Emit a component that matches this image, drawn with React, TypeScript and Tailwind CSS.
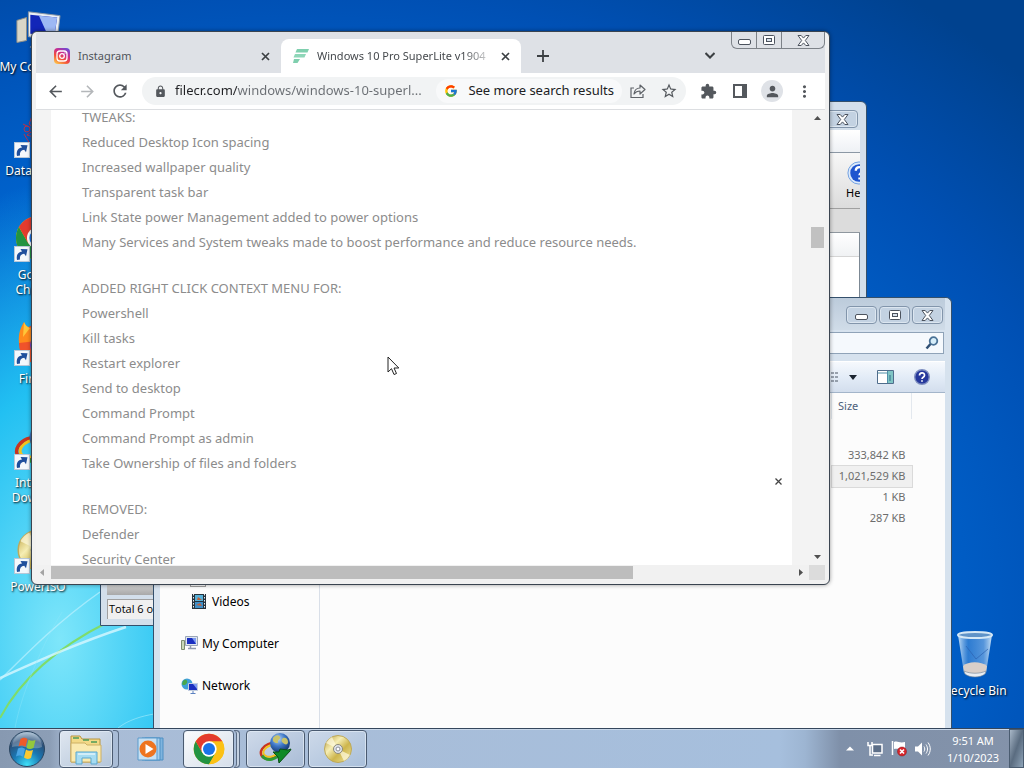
import React from "react";
import {
  MdArrowBack,
  MdArrowForward,
  MdExtension,
  MdLock,
  MdMoreVert,
  MdPerson,
  MdRefresh,
  MdStarBorder,
} from "react-icons/md";
import { FcGoogle } from "react-icons/fc";

/* ---------- Shared glyphs ---------- */

const MinGlyph = () => (
  <svg width="13" height="6" viewBox="0 0 13 6" aria-hidden="true">
    <rect x="0.5" y="0.5" width="12" height="5" rx="1.5" fill="#fff" stroke="#4c535e" />
  </svg>
);

const MaxGlyph = () => (
  <svg width="12" height="10" viewBox="0 0 12 10" aria-hidden="true">
    <rect x="0.5" y="0.5" width="11" height="9" rx="1" fill="#fff" stroke="#4c535e" />
    <rect x="3.5" y="3.5" width="5" height="3" fill="#d9e2ec" stroke="#4c535e" />
  </svg>
);

const CloseGlyph = () => (
  <svg width="13" height="11" viewBox="0 0 13 11" aria-hidden="true">
    <path
      d="M1 .5h3.2l2.3 2.6L8.800.5H12L8.300 5.500 12 10.500H8.800L6.500 7.900 4.200 10.500H1l3.700-5z"
      fill="#fff"
      stroke="#4c535e"
    />
  </svg>
);

const ShortcutArrow = () => (
  <svg width="16" height="16" viewBox="0 0 16 16" className="absolute bottom-0 left-0" aria-hidden="true">
    <rect x="0.5" y="0.5" width="15" height="15" fill="#f4f8fc" stroke="#b8c8d8" />
    <path d="M3 14C2 9 4 6 8 5.500L6.500 3l7 .3-1.500 7-1.800-2.600C7 8 5.500 10 6 13.500z" fill="#1f4f9c" />
  </svg>
);

const ChromeLogo = ({ size }: { size: number }) => (
  <svg width={size} height={size} viewBox="0 0 48 48" aria-hidden="true">
    <circle cx="24" cy="24" r="23" fill="#fbc116" />
    <path d="M4.100 12.500A23 23 0 0 0 24 47L34 29.700 24 24 14 29.700z" fill="#229342" />
    <path d="M43.900 12.500A23 23 0 0 1 24 47L34 29.700 32 16z" fill="#fbc116" />
    <path d="M4.100 12.500A23 23 0 0 1 43.900 12.500H24L14 29.700z" fill="#e33b2e" />
    <circle cx="24" cy="24" r="11.500" fill="#fff" />
    <circle cx="24" cy="24" r="9" fill="#1a73e8" />
  </svg>
);

const IdmLogo = ({ size }: { size: number }) => (
  <svg width={size} height={size} viewBox="0 0 34 34" aria-hidden="true">
    <defs>
      <radialGradient id="idmGlobe" cx="0.4" cy="0.3" r="0.7">
        <stop offset="0" stopColor="#bcd8f4" />
        <stop offset="0.5" stopColor="#3f78c8" />
        <stop offset="1" stopColor="#14366e" />
      </radialGradient>
    </defs>
    <g fill="none" transform="rotate(-22 12 19)">
      <ellipse cx="12" cy="19" rx="10.500" ry="7.500" stroke="#c8341f" strokeWidth="2.500" />
      <ellipse cx="12.500" cy="19" rx="8.500" ry="5.500" stroke="#f2c21c" strokeWidth="2" />
      <path d="M2 20C4 28 14 29 21 24" stroke="#2f9a35" strokeWidth="3" />
    </g>
    <circle cx="21" cy="11" r="10" fill="url(#idmGlobe)" />
    <path d="M14 6c3-4 6-3 7-1s-3 3-2 5-4 1-5-1zM24 6c3-1 5 1 5 4s-3 3-5 1-2-3 0-5z" fill="#c9c36a" />
    <path d="M14 20l6 0 1-3 8 1 3-1-1 2-11 12 -1-6z" fill="#0f8a26" stroke="#0a4f15" />
  </svg>
);

const DiscLogo = ({ size }: { size: number }) => (
  <svg width={size} height={size} viewBox="0 0 30 30" aria-hidden="true">
    <defs>
      <linearGradient id="disc" x1="0" y1="0" x2="1" y2="1">
        <stop offset="0" stopColor="#b79a36" />
        <stop offset="0.35" stopColor="#f6eeb4" />
        <stop offset="0.6" stopColor="#cdb54c" />
        <stop offset="1" stopColor="#f3e9a2" />
      </linearGradient>
    </defs>
    <circle cx="15" cy="15" r="13.500" fill="url(#disc)" stroke="#bda95a" />
    <path d="M15 15 3 9a13 13 0 0 1 6-6zM15 15l12 6a13 13 0 0 1-6 6z" fill="#fffbe0" opacity="0.700" />
    <circle cx="15" cy="15" r="4.500" fill="#dfe3ea" stroke="#8c8a78" />
    <circle cx="15" cy="15" r="2" fill="#fff" stroke="#8c9098" />
  </svg>
);

const ComputerIcon = ({ size }: { size: number }) => (
  <svg width={size} height={size} viewBox="0 0 48 48" aria-hidden="true">
    <path d="M2 14l10-3v24L2 37z" fill="#d9d6c8" stroke="#8f8f88" />
    <path d="M14 5l33 4-3 26-30-4z" fill="#e9eef4" stroke="#8b96a5" />
    <path d="M16 8l28 3-3 20-25-3z" fill="#1226b8" />
    <path d="M25 9l19 2-3 19-7-1z" fill="#9db8f4" />
    <path d="M20 37h20l4 5H16z" fill="#cdd4dd" stroke="#8b96a5" />
  </svg>
);

/* ---------- Desktop ---------- */

const Wallpaper = () => (
  <svg
    className="absolute bottom-0 left-0"
    width="200"
    height="160"
    viewBox="0 568 200 160"
    fill="none"
    aria-hidden="true"
  >
    <path d="M0 718C18 684 52 650 108 622" stroke="#7fdc6a" strokeWidth="2" />
    <path d="M0 678C40 660 80 642 126 627" stroke="#d8f8ff" strokeWidth="2.500" opacity="0.800" />
    <path d="M0 680C30 650 60 620 100 592" stroke="#c8f4ff" strokeWidth="1.500" opacity="0.600" />
    <path d="M118 728C128 720 142 716 154 714" stroke="#a8ecfc" opacity="0.600" />
    <path d="M15 728C22 690 45 640 62 612" stroke="#8fe6fb" opacity="0.400" />
  </svg>
);

interface DesktopIconProps {
  label: string;
  shortcut?: boolean;
  children: React.ReactNode;
}

const DesktopIcon: React.FC<DesktopIconProps> = ({ label, shortcut, children }) => {
  return (
    <button className="flex h-26 w-19 flex-col items-center gap-[5px]">
      <span className="relative flex h-12 w-12 items-center justify-center">
        {children}
        {shortcut && <ShortcutArrow />}
      </span>
      <span className="text-center text-xs leading-[15px] whitespace-pre text-white [text-shadow:1px_1px_2px_#000]">
        {label}
      </span>
    </button>
  );
};

const captionButton =
  "flex h-[18px] items-center justify-center rounded-sm border border-[#8295ab] bg-[#c3d2e2] shadow-[inset_0_0_0_1px_#dce6f0]";

/* ---------- Archive manager, at the back ---------- */

const ArchiveWindow = () => {
  return (
    <section
      aria-label="Archive manager"
      className="absolute top-[101px] left-[100px] flex h-[525px] w-[767px] flex-col rounded-t-md border border-[#34506c] bg-[#d3dfeb] px-1.5 pb-1.5"
    >
      <header className="flex h-7 shrink-0 items-end justify-end pr-0.5 pb-0.5">
        <button aria-label="Close" className={`${captionButton} w-8`}>
          <CloseGlyph />
        </button>
      </header>
      <div className="h-[23px] shrink-0 border-b border-[#8c98a5] bg-gradient-to-b from-white to-[#eef1f5]" />
      <div className="flex h-14 shrink-0 items-center justify-end border-b border-[#a0a0a0] bg-gradient-to-b from-[#f7f7f7] to-[#dcdcdc]">
        <button aria-label="Help" className="flex w-3.5 flex-col items-start overflow-hidden text-[11px] leading-4 text-black">
          <svg width="26" height="24" viewBox="0 0 26 26" className="shrink-0" aria-hidden="true">
            <circle cx="13" cy="13" r="12" fill="#dceafb" stroke="#6a9be0" />
            <circle cx="13" cy="13" r="9.500" fill="#1f55cf" />
            <path d="M9.500 10.500c0-5 7.500-5 7.500-.5 0 3-3.500 3-3.500 5.500M13.500 18v2" fill="none" stroke="#fff" strokeWidth="2.500" />
          </svg>
          He
        </button>
      </div>
      <div className="h-6 shrink-0 border-b border-[#8f979f] bg-[#dcdcdc]" />
      <div className="flex grow flex-col border-r border-[#7c8894] bg-white">
        <div className="h-6 border-b border-[#d5d5d5] bg-gradient-to-b from-white to-[#f0f2f4]" />
      </div>
      <div className="h-3 shrink-0 bg-gradient-to-b from-[#d4d4d4] to-[#a9a9a9]" />
      <div className="mt-1 flex h-5 shrink-0 items-center border-t border-l border-[#a0a0a0] bg-[#f0f0f0] pl-px font-['Open_Sans',sans-serif] text-[11px] text-black">
        Total 6 obj
      </div>
    </section>
  );
};

/* ---------- Explorer window ---------- */

const files = [
  { size: "333,842 KB", selected: false },
  { size: "1,021,529 KB", selected: true },
  { size: "1 KB", selected: false },
  { size: "287 KB", selected: false },
];

const ExplorerWindow = () => {
  return (
    <section
      aria-label="Explorer"
      className="absolute top-[297px] bottom-0 left-[153px] flex w-[799px] flex-col rounded-t-md border border-b-0 border-[#34506c] bg-[#d6e2ee] px-1.5"
    >
      <header className="flex h-8 shrink-0 items-start justify-end gap-0.5 bg-gradient-to-b from-[#bccbdb] to-[#d0dce8] pt-2 pr-0.5">
        <button aria-label="Minimize" className={`${captionButton} w-[31px] pt-1`}>
          <MinGlyph />
        </button>
        <button aria-label="Maximize" className={`${captionButton} w-[31px]`}>
          <MaxGlyph />
        </button>
        <button aria-label="Close" className={`${captionButton} w-[31px]`}>
          <CloseGlyph />
        </button>
      </header>
      <div className="flex h-[31px] shrink-0 justify-end pt-0.5 pr-px">
        <label className="relative flex h-[22px] w-50 items-center border border-[#8fa3b8] bg-[#f5f9fd]">
          <input type="search" aria-label="Search folder" className="w-full bg-transparent px-1 text-xs outline-none" />
          <svg width="14" height="14" viewBox="0 0 14 14" className="mr-1 shrink-0" aria-hidden="true">
            <circle cx="8.500" cy="5" r="3.800" fill="#d6eefa" stroke="#4a7296" strokeWidth="1.800" />
            <path d="M5.500 8 1.500 12.500" stroke="#2f4f74" strokeWidth="2.500" />
          </svg>
        </label>
      </div>
      <div className="flex h-8 shrink-0 items-center justify-end border-t border-b border-t-white border-b-[#a3b5ca] bg-gradient-to-b from-[#f6f9fd] via-[#e3ecf7] to-[#d3deed] pr-[15px]">
        <button aria-label="Change view" className="flex items-center gap-2.5">
          <svg width="14" height="10" viewBox="0 0 14 10" aria-hidden="true">
            <path d="M0 1h5M6 1h3M10 1h3M0 5h5M6 5h3M10 5h3M0 9h5M6 9h3M10 9h3" stroke="#4b5563" />
          </svg>
          <svg width="8" height="5" viewBox="0 0 8 5" aria-hidden="true">
            <path d="M0 0h8L4 5z" fill="#1b2430" />
          </svg>
        </button>
        <button aria-label="Preview pane" className="ml-5">
          <svg width="17" height="14" viewBox="0 0 17 14" aria-hidden="true">
            <path d="M.5.5h16v13H.5z" fill="#fff" stroke="#4f6d8c" />
            <path d="M10 1h6v12h-6z" fill="#7fc4c4" />
            <path d="M1 3h9M10.500 1v12" stroke="#4f8fa8" />
            <path d="M13 5v6" stroke="#2f6f88" />
          </svg>
        </button>
        <button aria-label="Help" className="ml-5">
          <svg width="16" height="16" viewBox="0 0 16 16" aria-hidden="true">
            <circle cx="8" cy="8" r="7.300" fill="#26389c" stroke="#7f8fc0" strokeWidth="1.400" />
            <path d="M5.500 6.500c0-3.500 5-3.500 5-.3 0 2-2.500 2-2.500 3.800M8 11.300v1.500" fill="none" stroke="#fff" strokeWidth="1.700" />
          </svg>
        </button>
      </div>
      <div className="flex grow bg-[#fcfcfc]">
        <nav className="flex w-40 flex-col justify-end gap-[21px] border-r border-[#d9dfe8] pb-8 text-xs text-black">
          <div className="flex flex-col gap-1">
            <div className="ml-[30px] h-3 w-4 border border-[#a0a0a0] bg-white" />
            <a href="#videos" className="flex h-[21px] items-center gap-1.5 pl-8">
              <svg width="14" height="15" viewBox="0 0 14 15" aria-hidden="true">
                <path d="M0 0h14v15H0z" fill="#26323c" />
                <path d="M3 1h8v6H3z" fill="#58b0d8" />
                <path d="M3 8h8v6H3z" fill="#3f8fc8" />
                <path d="M6 3l4 3H5zM4 11l4-2 2 3z" fill="#c0603a" />
                <path d="M1.500 0v15M12.500 0v15" stroke="#e8eef2" strokeDasharray="1.500 1.500" />
              </svg>
              Videos
            </a>
          </div>
          <a href="#computer" className="flex h-[21px] items-center gap-1 pl-[21px]">
            <svg width="17" height="15" viewBox="0 0 17 15" aria-hidden="true">
              <path d="M.5 4.500h3v9h-3z" fill="#c9d8b8" stroke="#7d8c70" />
              <path d="M4.500.5h12v9h-12z" fill="#dfe6f0" stroke="#9aa6b8" />
              <path d="M6 2h9v6H6z" fill="#1a2fc0" />
              <path d="M11 2h4v6z" fill="#7f9bf0" />
              <path d="M7 12.500h8M9.500 10v2" stroke="#8f9ab0" strokeWidth="1.500" />
            </svg>
            My Computer
          </a>
          <a href="#network" className="flex h-[21px] items-center gap-1 pl-[21px]">
            <svg width="17" height="16" viewBox="0 0 17 16" aria-hidden="true">
              <circle cx="6" cy="6" r="5.500" fill="#3fa0d8" />
              <path d="M2 3c3-3 5 0 4 2S2 8 1 6zM7 8l3-1v4H7z" fill="#49a84c" />
              <path d="M7.500 5.500h9v7h-9z" fill="#1a2fc0" stroke="#c3cede" />
              <path d="M12 6h4v5z" fill="#7f9bf0" />
              <path d="M12 13v2M9.500 15.500h5" stroke="#5a80c0" />
            </svg>
            Network
          </a>
        </nav>
        <div className="grow">
          <table className="ml-auto mr-[33px] text-right text-[11px] text-[#6d6d6d]">
            <thead>
              <tr>
                <th className="h-[26px] border-x border-[#e3e8ee] px-1.5 text-left font-normal text-[#4c607a]">Size</th>
              </tr>
            </thead>
            <tbody className="before:block before:h-[26px] before:content-['']">
              {files.map((file) => (
                <tr
                  key={file.size}
                  className={file.selected ? "h-[21px] bg-[#f0f0f0] outline outline-[#dadada]" : "h-[21px]"}
                >
                  <td className="w-20 pr-1.5 whitespace-nowrap">{file.size}</td>
                </tr>
              ))}
            </tbody>
          </table>
        </div>
      </div>
    </section>
  );
};

/* ---------- Browser window ---------- */

const paragraphs = [
  [
    "TWEAKS:",
    "Reduced Desktop Icon spacing",
    "Increased wallpaper quality",
    "Transparent task bar",
    "Link State power Management added to power options",
    "Many Services and System tweaks made to boost performance and reduce resource needs.",
  ],
  [
    "ADDED RIGHT CLICK CONTEXT MENU FOR:",
    "Powershell",
    "Kill tasks",
    "Restart explorer",
    "Send to desktop",
    "Command Prompt",
    "Command Prompt as admin",
    "Take Ownership of files and folders",
  ],
  ["REMOVED:", "Defender", "Security Center"],
];

const TabClose = ({ label }: { label: string }) => (
  <button aria-label={label} className="flex h-4 w-4 shrink-0 items-center justify-center">
    <svg width="9" height="9" viewBox="0 0 9 9" aria-hidden="true">
      <path d="M1 1l7 7M8 1 1 8" stroke="#3c4043" strokeWidth="1.700" />
    </svg>
  </button>
);

const TabStrip = () => {
  return (
    <header className="relative flex h-[41px] shrink-0 items-end bg-[#dee1e6] pl-2.5">
      <div className="flex h-[34px] w-[235px] items-center gap-2 px-2">
        <svg width="16" height="16" viewBox="0 0 16 16" aria-hidden="true">
          <defs>
            <linearGradient id="insta" x1="0.2" y1="1" x2="0.8" y2="0">
              <stop offset="0" stopColor="#fdc04a" />
              <stop offset="0.35" stopColor="#f2503c" />
              <stop offset="0.65" stopColor="#cc2c8c" />
              <stop offset="1" stopColor="#6a4cd8" />
            </linearGradient>
          </defs>
          <rect width="16" height="16" rx="4" fill="url(#insta)" />
          <rect x="3" y="3" width="10" height="10" rx="3" fill="none" stroke="#fff" strokeWidth="1.300" />
          <circle cx="8" cy="8" r="2.300" fill="none" stroke="#fff" strokeWidth="1.300" />
          <circle cx="11" cy="5" r="0.700" fill="#fff" />
        </svg>
        <button className="grow text-left text-[11px] text-[#50545a]">Instagram</button>
        <TabClose label="Close Instagram" />
      </div>
      <div className="flex h-[34px] w-60 items-center gap-2 rounded-t-lg bg-white pr-2 pl-3">
        <svg width="16" height="14" viewBox="0 0 16 14" className="shrink-0" aria-hidden="true">
          <path d="M4 0h12l-1.500 3.500H2.500z" fill="#7fcfae" />
          <path d="M2 5h11l-1.500 3.500H.5z" fill="#8ed6b8" />
          <path d="M1 10h6l-2.500 4H0z" fill="#7fcfae" />
        </svg>
        <button className="grow overflow-hidden text-left text-[11px] whitespace-nowrap text-[#45494d] [mask-image:linear-gradient(90deg,#000_85%,#0003)]">
          Windows 10 Pro SuperLite v1904
        </button>
        <TabClose label="Close tab" />
      </div>
      <button aria-label="New tab" className="mb-[11px] ml-4">
        <svg width="12" height="12" viewBox="0 0 12 12" aria-hidden="true">
          <path d="M6 0v12M0 6h12" stroke="#3c4043" strokeWidth="1.800" />
        </svg>
      </button>
      <button aria-label="Search tabs" className="mr-[110px] mb-3.5 ml-auto">
        <svg width="10" height="7" viewBox="0 0 10 7" aria-hidden="true">
          <path d="M.5 1 5 5.500 9.500 1" fill="none" stroke="#3c4043" strokeWidth="2" />
        </svg>
      </button>
      <div className="absolute top-0 right-0 flex h-[17px] divide-x divide-[#7d8288] rounded-b-md border border-t-0 border-[#7d8288]">
        <button aria-label="Minimize" className="flex w-[25px] items-center justify-center pt-1">
          <MinGlyph />
        </button>
        <button aria-label="Maximize" className="flex w-[25px] items-center justify-center">
          <MaxGlyph />
        </button>
        <button aria-label="Close" className="flex w-[42px] items-center justify-center">
          <CloseGlyph />
        </button>
      </div>
    </header>
  );
};

const Toolbar = () => {
  return (
    <div className="flex h-[37px] shrink-0 items-center border-b border-[#dcdee1] bg-white pr-[11px] pl-2.5 text-[#54585d]">
      <button aria-label="Back" className="w-8">
        <MdArrowBack size={19} />
      </button>
      <button aria-label="Forward" className="w-8 text-[#b4b7ba]">
        <MdArrowForward size={19} />
      </button>
      <button aria-label="Reload" className="w-8">
        <MdRefresh size={20} />
      </button>
      <div className="flex h-7 grow items-center rounded-full bg-[#f1f3f4] pr-2 pl-3">
        <MdLock size={13} className="shrink-0" />
        <input
          type="text"
          aria-label="Address"
          defaultValue="filecr.com/windows/windows-10-superl..."
          className="ml-2 w-0 grow bg-[linear-gradient(90deg,#202124_62px,#6a6e73_62px)] bg-clip-text text-[13px] text-transparent outline-none"
        />
        <button className="flex h-6 items-center gap-2.5 rounded-full bg-[#f8f9fa] px-2 text-[13px] whitespace-nowrap text-[#202124]">
          <FcGoogle size={14} />
          See more search results
        </button>
        <button aria-label="Share" className="ml-2">
          <svg width="16" height="16" viewBox="0 0 16 16" fill="none" stroke="#5f6368" strokeWidth="1.200" aria-hidden="true">
            <path d="M4 5H1v9.500h12V11" />
            <path d="M4 11c.5-4 3-6 6-6V2l5 4.500-5 4.500V8C7.500 8 5.500 9 4 11z" strokeLinejoin="round" />
          </svg>
        </button>
        <button aria-label="Bookmark" className="ml-3.5">
          <MdStarBorder size={18} />
        </button>
      </div>
      <button aria-label="Extensions" className="ml-3.5">
        <MdExtension size={17} />
      </button>
      <button aria-label="Side panel" className="ml-4">
        <svg width="14" height="14" viewBox="0 0 14 14" aria-hidden="true">
          <path d="M1 1h12v12H1z" fill="none" stroke="#54585d" strokeWidth="2" />
          <path d="M9 1h4v12H9z" fill="#54585d" />
        </svg>
      </button>
      <button aria-label="Profile" className="ml-3.5 flex h-[22px] w-[22px] items-center justify-center rounded-full bg-[#dfe2e7]">
        <MdPerson size={17} />
      </button>
      <button aria-label="Menu" className="ml-3">
        <MdMoreVert size={19} />
      </button>
    </div>
  );
};

const BrowserWindow = () => {
  return (
    <section
      aria-label="Browser"
      className="absolute top-[31px] left-[31px] flex h-[554px] w-[799px] flex-col overflow-hidden rounded-md border border-[#3a4450] bg-[#f1f1f1] px-1 pb-1 shadow-[0_0_4px_#0006]"
    >
      <TabStrip />
      <Toolbar />
      <div className="flex min-h-0 grow">
        <article className="relative min-w-0 grow overflow-hidden border-x-[15px] border-r-[17px] border-[#f3f3f3] bg-white">
          <div className="-mt-[5px] ml-[31px] flex flex-col gap-[21px] text-[13px] leading-[25px] whitespace-nowrap text-[#8c8c8c]">
            {paragraphs.map((lines) => (
              <div key={lines[0]}>
                {lines.map((line) => (
                  <p key={line}>{line}</p>
                ))}
              </div>
            ))}
          </div>
          <button aria-label="Close ad" className="absolute right-2.5 bottom-20">
            <svg width="7" height="7" viewBox="0 0 7 7" aria-hidden="true">
              <path d="M.5.5l6 6M6.500.5l-6 6" stroke="#444" strokeWidth="1.300" />
            </svg>
          </button>
        </article>
        <div className="flex w-4 flex-col items-center justify-between bg-[#f3f3f3] py-1.5">
          <svg width="7" height="4" viewBox="0 0 7 4" aria-hidden="true">
            <path d="M0 4h7L3.500 0z" fill="#505050" />
          </svg>
          <div className="mb-50 h-[21px] w-[13px] bg-[#c1c1c1]" />
          <svg width="7" height="4" viewBox="0 0 7 4" aria-hidden="true">
            <path d="M0 0h7L3.500 4z" fill="#505050" />
          </svg>
        </div>
      </div>
      <div className="flex h-[15px] shrink-0 items-center">
        <svg width="15" height="7" viewBox="0 0 15 7" aria-hidden="true">
          <path d="M8 0v7L4 3.500z" fill="#a3a3a3" />
        </svg>
        <div className="h-[13px] w-[582px] bg-[#bdbdbd]" />
        <svg width="4" height="7" viewBox="0 0 4 7" className="mr-1.5 ml-auto" aria-hidden="true">
          <path d="M0 0v7l4-3.500z" fill="#505050" />
        </svg>
        <div className="h-full w-4 bg-[#dcdcdc]" />
      </div>
    </section>
  );
};

/* ---------- Taskbar ---------- */

const taskButton =
  "flex h-[38px] items-center justify-center rounded-sm border border-[#4a5a70] shadow-[inset_0_0_0_1px_#e6eef8aa]";

const Taskbar = () => {
  return (
    <footer className="relative flex h-10 shrink-0 items-center border-t border-[#34465c] bg-[linear-gradient(90deg,#8799b1_0,#8c9eb6_50px,#a9bcd6_70px,#a6bfdd_780px,#9db5d2_805px,#7f90a9_840px,#8493aa_100%)] shadow-[inset_0_1px_0_#c9d8ea]">
      <button aria-label="Start" className="mr-[13px] ml-2 shrink-0">
        <svg width="38" height="38" viewBox="0 0 38 38" aria-hidden="true">
          <defs>
            <radialGradient id="orb" cx="0.5" cy="0.95" r="0.9">
              <stop offset="0" stopColor="#3fe0f8" />
              <stop offset="0.45" stopColor="#1a78b4" />
              <stop offset="0.8" stopColor="#2b4f78" />
              <stop offset="1" stopColor="#8aa6c0" />
            </radialGradient>
          </defs>
          <circle cx="19" cy="19" r="17.500" fill="url(#orb)" stroke="#2a4560" />
          <path d="M4 17a15 15 0 0 1 30 0c-8 4-20-3-30 0z" fill="#fff" opacity="0.250" />
          <path d="M12.500 9c3-2 5-1.500 7 0l-2 8c-2-1.500-4-2-7-.5z" fill="#ee5a2a" />
          <path d="M20.500 9.500c2 1.500 4.500 1.500 7 .5l-2 8c-3 1.500-5 1-7 0z" fill="#93c83d" />
          <path d="M10 18.500c3-1.500 5-1 7 .5l-2 8c-2-1.500-4-2-7-.5z" fill="#49a4e4" />
          <path d="M18 19.500c2 1.500 4.500 1.500 7 .5l-2 8c-3 1.500-5 1-7-.5z" fill="#fcc931" />
        </svg>
      </button>
      <button
        aria-label="File Explorer"
        className={`${taskButton} w-[54px] bg-gradient-to-br from-[#e0e7f0] to-[#b3c5da]`}
      >
        <svg width="34" height="32" viewBox="0 0 34 32" aria-hidden="true">
          <path d="M2 3h9l2 3h18v23H2z" fill="#f3d987" stroke="#b8953e" />
          <path d="M4 5h6M14 7h6M22 9h6" stroke="#4d9a58" strokeWidth="1.500" />
          <path d="M2 10h14l2 2h14v17H2z" fill="#faeab0" stroke="#cdb065" />
          <path d="M7 19h21v12h-6v-6h-9v6H7z" fill="#a6dcf2" stroke="#5aa7cf" />
          <path d="M9 21h17" stroke="#fff" />
        </svg>
      </button>
      <div className="h-[38px] w-1.5 rounded-r-sm border-y border-r border-[#5b6c84]" />
      <button aria-label="Media Player" className="flex h-[38px] w-16 items-center justify-center">
        <svg width="28" height="26" viewBox="0 0 28 26" aria-hidden="true">
          <path d="M8 2h18v22H8z" fill="#7fb4de" stroke="#4f90c4" />
          <path d="M5 2h18v22H5z" fill="#a4cdec" stroke="#4f90c4" />
          <path d="M1 2h19v22H1z" fill="#c7e0f3" stroke="#5b9bcc" />
          <circle cx="11" cy="13" r="8.500" fill="#ee7420" />
          <path d="M8.500 8v10l8-5z" fill="#fff" />
        </svg>
      </button>
      <button aria-label="Chrome" className={`${taskButton} w-[51px] bg-gradient-to-br from-[#fbfcfd] to-[#d5deea]`}>
        <ChromeLogo size={32} />
      </button>
      <div className="mr-1.5 h-[38px] w-1.5 rounded-r-sm border-y border-r border-[#5b6c84] shadow-[inset_-2px_0_0_#c5d2e2,inset_-3px_0_0_#5b6c84]" />
      <button
        aria-label="Download Manager"
        className={`${taskButton} mr-[3px] w-[59px] bg-gradient-to-br from-[#cfdaea] to-[#a9bcd6]`}
      >
        <IdmLogo size={34} />
      </button>
      <button aria-label="Disc tool" className={`${taskButton} w-[59px] bg-gradient-to-br from-[#cdd9e9] to-[#a9bfda]`}>
        <DiscLogo size={30} />
      </button>

      <div className="ml-auto flex h-full items-center">
        <button aria-label="Show hidden icons" className="mr-[13px]">
          <svg width="8" height="5" viewBox="0 0 8 5" aria-hidden="true">
            <path d="M0 4.500h8L4 .5z" fill="#fff" />
          </svg>
        </button>
        <button aria-label="Network" className="mr-2">
          <svg width="16" height="16" viewBox="0 0 16 16" fill="none" aria-hidden="true">
            <path d="M5.500 3.500h9.500v8.500H5.500z" fill="#5d6f88" stroke="#fff" strokeWidth="1.500" />
            <path d="M7 14.500h6.500" stroke="#fff" strokeWidth="1.500" />
            <path d="M1 1v3.500h4V1M3 4v10h3" stroke="#fff" strokeWidth="1.500" />
          </svg>
        </button>
        <button aria-label="Action Center" className="mr-1.5">
          <svg width="17" height="17" viewBox="0 0 17 17" aria-hidden="true">
            <path d="M1.500 1v14" stroke="#fff" strokeWidth="1.500" />
            <path d="M3 2c4-1.500 5 1.500 11 0v7c-5 1.500-7-1-11 0z" fill="#fff" />
            <circle cx="11" cy="11.500" r="4.500" fill="#d8252b" stroke="#8c1015" strokeWidth="0.500" />
            <path d="M9 9.500l4 4M13 9.500l-4 4" stroke="#fff" strokeWidth="1.600" />
          </svg>
        </button>
        <button aria-label="Volume" className="mr-2.5">
          <svg width="17" height="16" viewBox="0 0 17 16" fill="none" aria-hidden="true">
            <path d="M1 5.500h3L8 1.500v13l-4-4H1z" fill="#fff" />
            <path d="M10 5.500c1 1.500 1 3.500 0 5M12 3.500c2 3 2 6 0 9M14 1.500c3 4 3 9 0 13" stroke="#fff" />
          </svg>
        </button>
        <time className="mr-1 w-16 text-center text-[11px] leading-[17px] text-white">
          <span className="block">9:51 AM</span>
          <span className="block">1/10/2023</span>
        </time>
        <button
          aria-label="Show desktop"
          className="h-full w-[15px] border border-[#4a5c70] bg-gradient-to-br from-[#a9b8c8] via-[#5a6c80] to-[#8fa4b8]"
        />
      </div>
    </footer>
  );
};

export default function App() {
  return (
    <div className="flex h-screen flex-col overflow-hidden font-['Noto_Sans','Open_Sans',sans-serif]">
      <main className="relative grow overflow-hidden bg-[radial-gradient(ellipse_240px_460px_at_60px_640px,#7ee6fa_0,#22c0f2_55%,transparent_100%),radial-gradient(ellipse_1000px_760px_at_300px_600px,#0a8ff0_0,#0062cc_60%,#0050b4_80%,#00428f_100%)]">
        <Wallpaper />
        <div className="absolute top-1.5 left-0 flex flex-col">
          <DesktopIcon label="My Computer">
            <ComputerIcon size={46} />
          </DesktopIcon>
          <DesktopIcon label="DataWizard" shortcut>
            <svg width="36" height="44" viewBox="0 0 36 44" fill="none" stroke="#b8324a" aria-hidden="true">
              <path d="M12 4l-3 8 6 5-8 6 10 3M3 12l6 3M14 12l8-4v12l-6 6M4 22l6 10M20 30l8-8" />
              <circle cx="7" cy="17" r="3" />
            </svg>
          </DesktopIcon>
          <DesktopIcon label={"Google\nChrome"} shortcut>
            <ChromeLogo size={46} />
          </DesktopIcon>
          <DesktopIcon label="Firefox" shortcut>
            <svg width="46" height="46" viewBox="0 0 46 46" aria-hidden="true">
              <circle cx="24" cy="25" r="20" fill="#f0532b" />
              <path d="M4 24C3 14 6 8 9 3c1 3 3 5 6 6 3-4 7-6 12-6-4 5 4 9 3 18z" fill="#ff8a1c" />
              <path d="M9 3c1 3 3 5 6 6l-7 9z" fill="#ffc63a" />
              <circle cx="25" cy="26" r="10" fill="#6a3fd0" />
            </svg>
          </DesktopIcon>
          <DesktopIcon label={"Internet\nDownlo..."} shortcut>
            <IdmLogo size={48} />
          </DesktopIcon>
          <DesktopIcon label="PowerISO" shortcut>
            <DiscLogo size={44} />
          </DesktopIcon>
        </div>
        <div className="absolute right-[11px] bottom-[-6px]">
          <DesktopIcon label="Recycle Bin">
            <svg width="38" height="48" viewBox="0 0 38 48" aria-hidden="true">
              <defs>
                <linearGradient id="bin" x1="0" x2="1" y1="0" y2="0">
                  <stop offset="0" stopColor="#d8ebfa" stopOpacity="0.900" />
                  <stop offset="0.3" stopColor="#5b9ce0" stopOpacity="0.500" />
                  <stop offset="0.75" stopColor="#8fbdec" stopOpacity="0.600" />
                  <stop offset="1" stopColor="#e0f0fc" stopOpacity="0.900" />
                </linearGradient>
              </defs>
              <path d="M2 5h34l-6 38c-4 4-18 4-22 0z" fill="url(#bin)" />
              <path d="M7 36c5-5 18-5 24 0l-1 6c-5 5-17 5-22 0z" fill="#d9cfc9" />
              <path d="M8 41c6 3 16 3 22 0l-1 3c-5 4-15 4-20 0z" fill="#e9edf2" stroke="#6c7f94" strokeWidth="0.600" />
              <path d="M10 16l10 13 12-10" fill="none" stroke="#2c62b0" opacity="0.700" />
              <ellipse cx="19" cy="5" rx="17" ry="3" fill="#5f93c8" stroke="#d5e8f6" strokeWidth="2" />
            </svg>
          </DesktopIcon>
        </div>
        <ArchiveWindow />
        <ExplorerWindow />
        <BrowserWindow />
        <svg width="13" height="20" viewBox="0 0 13 20" className="absolute top-[356px] left-[387px]" aria-hidden="true">
          <path d="M1 1v15l3.500-3.300L7 18.500l2.500-1L7 12h4.800z" fill="#fff" stroke="#222" />
        </svg>
      </main>
      <Taskbar />
    </div>
  );
}
